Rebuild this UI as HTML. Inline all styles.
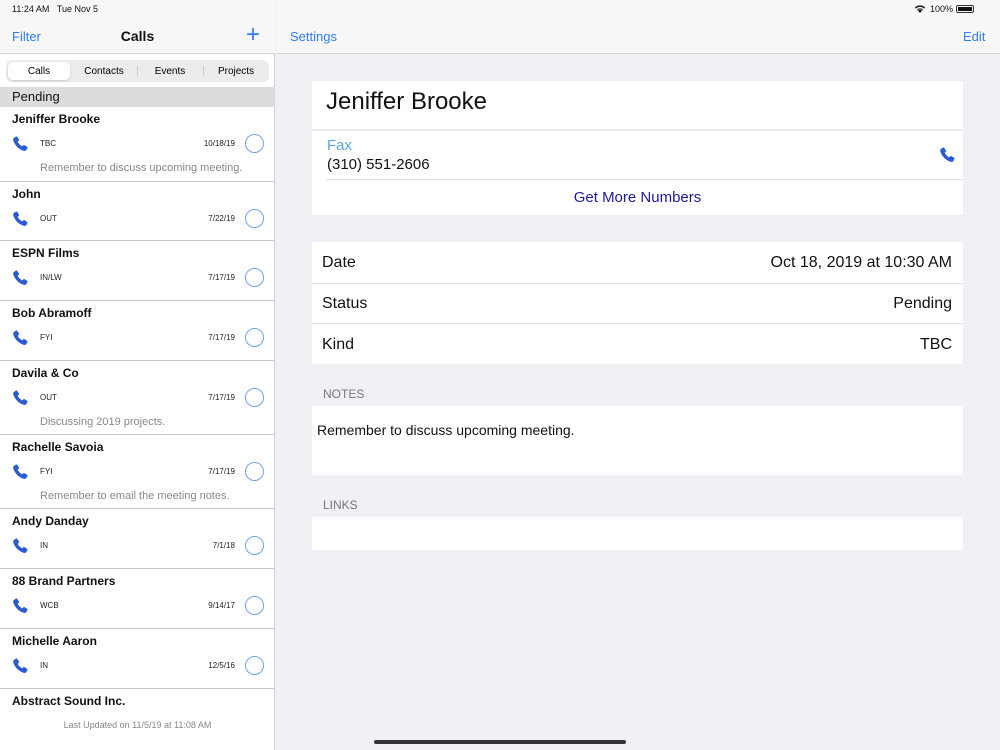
<!DOCTYPE html>
<html><head><meta charset="utf-8"><style>
*{margin:0;padding:0;box-sizing:border-box}
body{width:1000px;height:750px;overflow:hidden;font-family:"Liberation Sans",sans-serif;background:#f0f0f5;position:relative}
.abs{position:absolute}
#left{left:0;top:0;width:275px;height:750px;background:#fff;border-right:1px solid #d0d0d4}
.nav{background:#f7f7f7}
.blue{color:#2f7cf6}
.row{position:absolute;left:0;width:275px;border-bottom:1px solid #c8c8cc}
.row .n{position:absolute;left:12px;top:5px;font-size:12px;font-weight:bold;color:#111}
.row .k{position:absolute;left:40px;top:32px;font-size:8px;color:#222}
.row .d{position:absolute;right:40px;top:32px;font-size:8px;color:#222}
.row .c{position:absolute;left:245px;top:27px;width:19px;height:19px;border:1.3px solid #6fa3ea;border-radius:50%}
.row .t{position:absolute;left:40px;top:55px;font-size:11px;color:#888}
.row svg{position:absolute;left:11px;top:28px}
.card{position:absolute;left:312px;width:651px;background:#fff}
.line{position:absolute;left:312px;width:651px;height:1px;background:#e2e2e6}
.lab{position:absolute;left:10px;font-size:16px;color:#111}
.val{position:absolute;right:11px;font-size:16px;color:#111}
</style></head><body>
<div id="left" class="abs">
 <div class="abs nav" style="left:0;top:0;width:275px;height:54px;border-bottom:1px solid #d6d6da"></div>
 <div class="abs" style="left:12px;top:4px;font-size:9px;color:#111">11:24 AM&nbsp;&nbsp;&nbsp;Tue Nov 5</div>
 <div class="abs blue" style="left:12px;top:29px;font-size:13px">Filter</div>
 <div class="abs" style="left:0;width:275px;text-align:center;top:28px;font-size:14px;font-weight:bold;color:#111">Calls</div>
 <div class="abs blue" style="left:246px;top:21px;font-size:24px;font-weight:300">+</div>
 <div class="abs" style="left:6px;top:60px;width:263px;height:22px;background:#ececef;border-radius:6px"></div>
 <div class="abs" style="left:8px;top:62px;width:62px;height:18px;background:#fff;border-radius:5px;box-shadow:0 1px 2px rgba(0,0,0,.15)"></div>
 <div class="abs" style="left:137px;top:66px;width:1px;height:10px;background:#ccc"></div>
 <div class="abs" style="left:203px;top:66px;width:1px;height:10px;background:#ccc"></div>
 <div class="abs" style="left:8px;top:66px;width:62px;text-align:center;font-size:10px">Calls</div>
 <div class="abs" style="left:71px;top:66px;width:66px;text-align:center;font-size:10px">Contacts</div>
 <div class="abs" style="left:137px;top:66px;width:66px;text-align:center;font-size:10px">Events</div>
 <div class="abs" style="left:203px;top:66px;width:66px;text-align:center;font-size:10px">Projects</div>
 <div class="abs" style="left:0;top:87px;width:275px;height:20px;background:#dcdcdf"></div>
 <div class="abs" style="left:12px;top:89px;font-size:13px;color:#111">Pending</div>
</div>
<div id="rows"></div>
<div class="abs" style="left:0;width:275px;top:720px;text-align:center;font-size:9px;color:#888">Last Updated on 11/5/19 at 11:08 AM</div>

<div class="abs nav" style="left:276px;top:0;width:724px;height:54px;border-bottom:1px solid #d6d6da"></div>
<div class="abs" style="left:930px;top:4px;font-size:9px;color:#111">100%</div>
<div class="abs" style="left:956px;top:5px;width:18px;height:8px;border:1px solid #333;border-radius:2px;padding:1px"><div style="background:#111;height:100%"></div></div>
<svg class="abs" style="left:914px;top:4px" width="12" height="9" viewBox="0 0 12 9"><path d="M6 9 L8 6.5 A3 3 0 0 0 4 6.5Z M1 3.5 A7 7 0 0 1 11 3.5 L10 4.6 A5.5 5.5 0 0 0 2 4.6Z M3 5.6 A4.3 4.3 0 0 1 9 5.6 L8.3 6.3 A3.3 3.3 0 0 0 3.7 6.3Z" fill="#111"/></svg>
<div class="abs blue" style="left:290px;top:29px;font-size:13px">Settings</div>
<div class="abs blue" style="left:963px;top:29px;font-size:13px">Edit</div>

<div class="card" style="top:81px;height:134px"></div>
<div class="abs" style="left:326px;top:88px;font-size:24px;color:#111">Jeniffer Brooke</div>
<div class="abs" style="left:312px;top:129px;width:651px;height:2px;background:#ececf0"></div>
<div class="abs" style="left:327px;top:137px;font-size:15px;color:#5aa4e0">Fax</div>
<div class="abs" style="left:327px;top:156px;font-size:15px;color:#111">(310) 551-2606</div>
<svg class="abs" style="left:938px;top:146px" width="18" height="18" viewBox="0 0 24 24"><path d="M6.6 2.2c.7-.4 1.4-.2 1.8.4l2.1 3.3c.4.6.3 1.3-.2 1.8L9 9c.8 2.2 3.6 5.2 6 6.1l1.3-1.3c.5-.5 1.2-.6 1.8-.2l3.3 2.1c.6.4.8 1.1.4 1.8l-1 2c-.7 1.3-2.1 2-3.5 1.6C10.5 19.3 4.7 13.5 3 6.8 2.6 5.4 3.3 4 4.6 3.3z" fill="#2a5bd7"/></svg>
<div class="line" style="top:179px;left:326px;width:637px"></div>
<div class="abs" style="left:312px;width:651px;text-align:center;top:189px;font-size:15px;color:#1a1a9a">Get More Numbers</div>

<div class="card" style="top:242px;height:122px"></div>
<div class="line" style="top:283px"></div><div class="line" style="top:323px"></div>
<div class="abs" style="left:312px;top:242px;width:651px;height:122px">
 <div class="lab" style="top:12px">Date</div><div class="val" style="top:12px">Oct 18, 2019 at 10:30 AM</div>
 <div class="lab" style="top:53px">Status</div><div class="val" style="top:53px">Pending</div>
 <div class="lab" style="top:94px">Kind</div><div class="val" style="top:94px">TBC</div>
</div>
<div class="abs" style="left:323px;top:387px;font-size:12px;color:#777">NOTES</div>
<div class="card" style="top:406px;height:69px"></div>
<div class="abs" style="left:317px;top:422px;font-size:14px;color:#111">Remember to discuss upcoming meeting.</div>
<div class="abs" style="left:323px;top:498px;font-size:12px;color:#777">LINKS</div>
<div class="card" style="top:517px;height:33px"></div>
<div class="abs" style="left:374px;top:740px;width:252px;height:4px;border-radius:2px;background:#333"></div>

<script>
var R=[["Jeniffer Brooke","TBC","10/18/19","Remember to discuss upcoming meeting.",107,75],
["John","OUT","7/22/19","",182,59],["ESPN Films","IN/LW","7/17/19","",241,60],
["Bob Abramoff","FYI","7/17/19","",301,60],["Davila &amp; Co","OUT","7/17/19","Discussing 2019 projects.",361,74],
["Rachelle Savoia","FYI","7/17/19","Remember to email the meeting notes.",435,74],
["Andy Danday","IN","7/1/18","",509,60],["88 Brand Partners","WCB","9/14/17","",569,60],
["Michelle Aaron","IN","12/5/16","",629,60]];
var ph='<svg width="18" height="18" viewBox="0 0 24 24"><path d="M6.6 2.2c.7-.4 1.4-.2 1.8.4l2.1 3.3c.4.6.3 1.3-.2 1.8L9 9c.8 2.2 3.6 5.2 6 6.1l1.3-1.3c.5-.5 1.2-.6 1.8-.2l3.3 2.1c.6.4.8 1.1.4 1.8l-1 2c-.7 1.3-2.1 2-3.5 1.6C10.5 19.3 4.7 13.5 3 6.8 2.6 5.4 3.3 4 4.6 3.3z" fill="#2a5bd7"/></svg>';
var h='';R.forEach(function(r){h+='<div class="row" style="top:'+r[4]+'px;height:'+r[5]+'px"><div class="n">'+r[0]+'</div>'+ph+'<div class="k">'+r[1]+'</div><div class="d">'+r[2]+'</div><div class="c"></div>'+(r[3]?'<div class="t">'+r[3]+'</div>':'')+'</div>'});
h+='<div class="row" style="top:689px;height:30px;border:none"><div class="n">Abstract Sound Inc.</div></div>';
document.getElementById('rows').innerHTML=h;
</script>
</body></html>
